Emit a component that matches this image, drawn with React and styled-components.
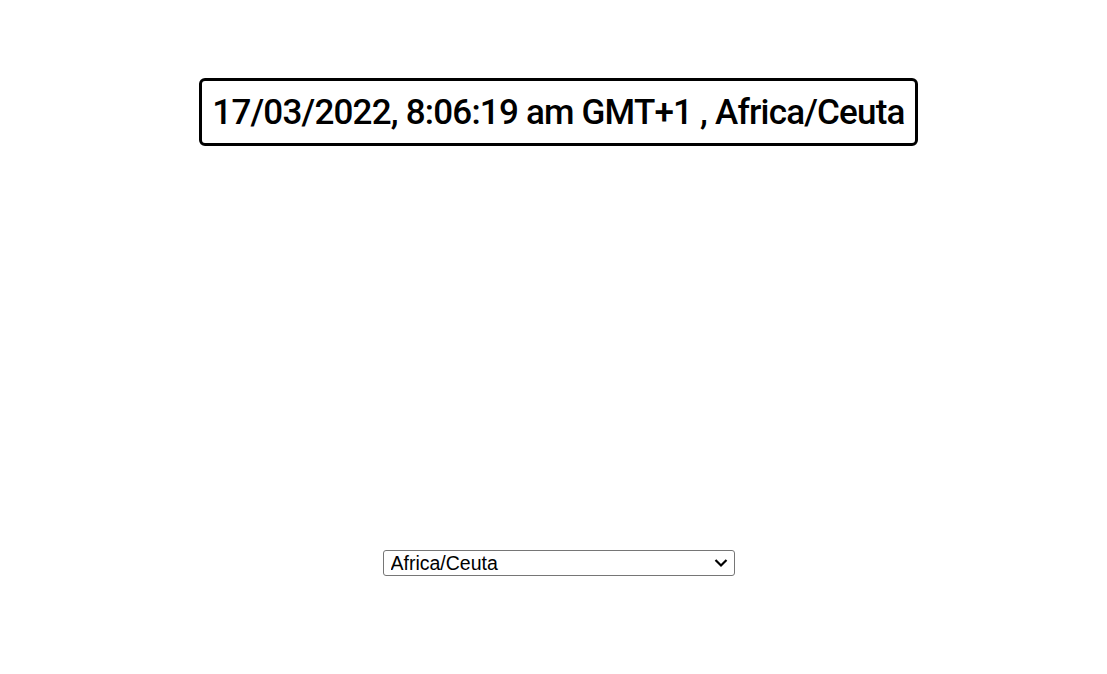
import React, { useState } from 'react';
import styled, { createGlobalStyle } from 'styled-components';

const GlobalStyle = createGlobalStyle`
  body {
    margin: 0;
    background: #ffffff;
  }
`;

const Page = styled.div`
  display: flex;
  flex-direction: column;
  align-items: center;
  padding-left: 10px;
  padding-top: 78px;
`;

const Clock = styled.div`
  box-sizing: border-box;
  height: 68px;
  display: flex;
  align-items: center;
  padding: 0 10px;
  border: 3px solid #000;
  border-radius: 6px;
  font-family: Roboto, 'DejaVu Sans', sans-serif;
  font-weight: 500;
  font-size: 35px;
  letter-spacing: -0.8px;
  color: #000;
  white-space: nowrap;
`;

const SelectWrap = styled.div`
  position: relative;
  margin-top: 404px;
  width: 352px;
  height: 26px;
`;

const ZoneSelect = styled.select`
  box-sizing: border-box;
  appearance: none;
  width: 100%;
  height: 100%;
  padding: 0 24px 0 7px;
  border: 1px solid #767676;
  border-radius: 3px;
  background: #fff;
  font-family: 'Liberation Sans', Arial, sans-serif;
  font-size: 19.5px;
  color: #000;
  outline: none;
`;

const Chevron = styled.svg`
  position: absolute;
  right: 7px;
  top: 8px;
  width: 14px;
  height: 10px;
  pointer-events: none;
`;

const zones = ['Africa/Ceuta', 'Africa/Cairo', 'Europe/London', 'Europe/Madrid'];

export default function App() {
  const [zone, setZone] = useState('Africa/Ceuta');
  return (
    <>
      <GlobalStyle />
      <Page>
        <Clock>17/03/2022, 8:06:19 am GMT+1 , {zone}</Clock>
        <SelectWrap>
          <ZoneSelect value={zone} onChange={e => setZone(e.target.value)}>
            {zones.map(z => (
              <option key={z} value={z}>
                {z}
              </option>
            ))}
          </ZoneSelect>
          <Chevron viewBox="0 0 14 10">
            <path d="M1.5 2 L7 7.5 L12.5 2" fill="none" stroke="#000" strokeWidth="2.2" />
          </Chevron>
        </SelectWrap>
      </Page>
    </>
  );
}
